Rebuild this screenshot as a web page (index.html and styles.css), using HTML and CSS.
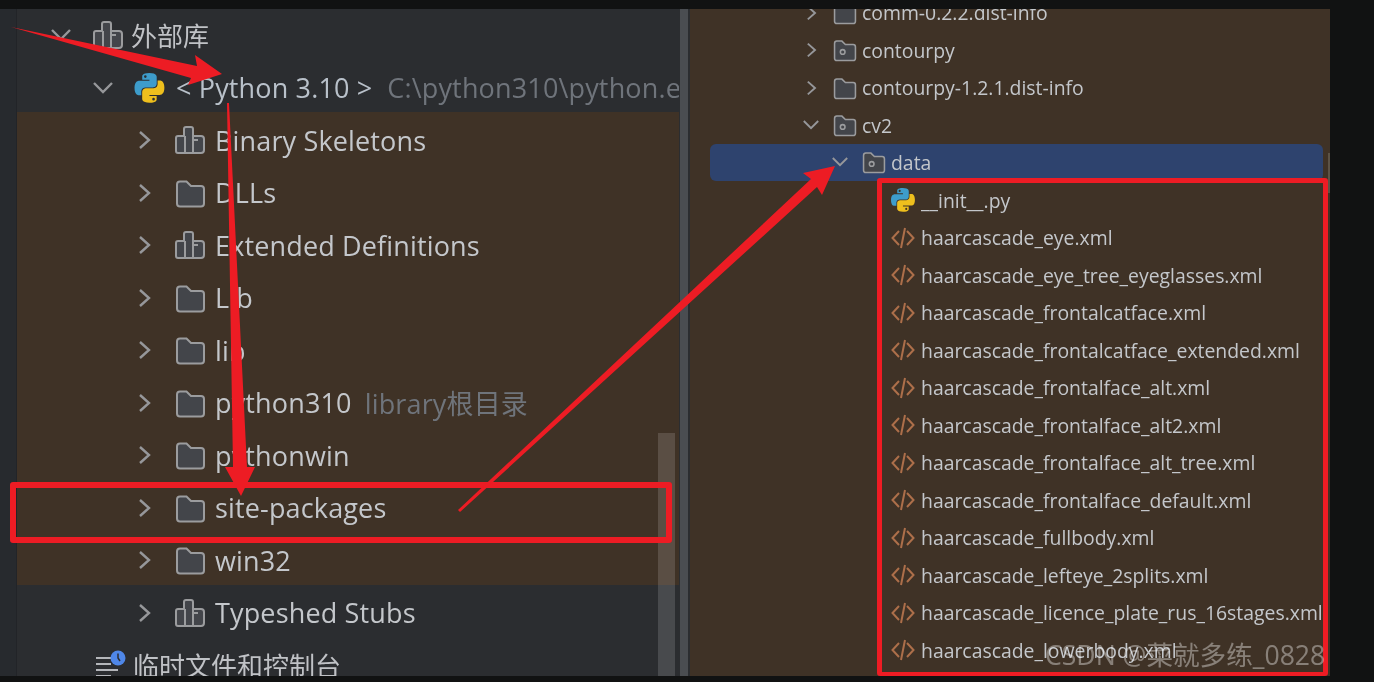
FILE: index.html
```html
<!DOCTYPE html>
<html lang="zh">
<head>
<meta charset="utf-8">
<title>Project tree</title>
<link rel="stylesheet" href="styles.css">
</head>
<body>
<svg class="defs" width="0" height="0" aria-hidden="true">
  <symbol id="right" viewBox="0 0 20 20"><path d="M6 2l9 8-9 8" fill="none" stroke-width="2.4"/></symbol>
  <symbol id="down" viewBox="0 0 20 20"><path d="M1 5l9 9 9-9" fill="none" stroke-width="2.4"/></symbol>
  <symbol id="folder" viewBox="0 0 31 30"><path class="fo" d="M2 6.500a3 3 0 0 1 3-3h6.500l4.500 4.500h10a3 3 0 0 1 3 3v14.500a3 3 0 0 1-3 3H5a3 3 0 0 1-3-3z"/></symbol>
  <symbol id="pack" viewBox="0 0 31 30"><path class="fo" d="M2 6.500a3 3 0 0 1 3-3h6.500l4.500 4.500h10a3 3 0 0 1 3 3v14.500a3 3 0 0 1-3 3H5a3 3 0 0 1-3-3z"/><circle class="fo" cx="12.500" cy="17.500" r="3"/></symbol>
  <symbol id="lib" viewBox="0 0 31 30"><path class="fo" d="M3 28a2 2 0 0 1-2-2V13a2 2 0 0 1 2-2h6V4a2 2 0 0 1 2-2h5a2 2 0 0 1 2 2v7h8a3 3 0 0 1 3 3v11a3 3 0 0 1-3 3z"/><path class="fo" d="M10 11v17M18 11v17M18 15h5"/></symbol>
  <symbol id="xml" viewBox="0 0 24 24"><path d="M8 5L1.500 12 8 19M16 5l6.500 7-6.500 7M14 2L10 22" fill="none" stroke="#ad6f4a" stroke-width="2"/></symbol>
  <symbol id="py" viewBox="0 0 111 111">
    <path fill="#3d9ccb" d="M54.900 0C26.900 0 28.600 12.200 28.600 12.200l0 12.600h26.700v3.800H18C18 28.600 0 26.500 0 55c0 28.500 15.700 27.500 15.700 27.500h9.400V69.300s-.5-15.700 15.500-15.700h26.600s15 .2 15-14.500V14.700S84 0 54.900 0zM40.100 8.500a4.800 4.800 0 1 1 0 9.600 4.800 4.800 0 0 1 0-9.600z"/>
    <path fill="#eebf1d" d="M55.700 110c28 0 26.300-12.200 26.300-12.200V85.200H55.300v-3.800h37.300S110.600 83.400 110.600 55s-15.700-27.400-15.700-27.400h-9.400v13.200s.5 15.700-15.500 15.700H43.400s-15-.2-15 14.500v24.300S26.600 110 55.700 110zm14.800-8.500a4.800 4.800 0 1 1 0-9.600 4.800 4.800 0 0 1 0 9.600z"/>
  </symbol>
  <symbol id="scratch" viewBox="0 0 31 30"><path d="M1 8h15M1 14h15M1 20h22M1 26h15" fill="none" stroke="#b4b6ba" stroke-width="2.200"/><circle cx="23" cy="8" r="7.500" fill="#4f87e8"/><path d="M23 3.500V8l2 3" fill="none" stroke="#2b2d30" stroke-width="1.500"/></symbol>
</svg>

<div class="frame">
  <section class="left">
    <div class="strip"></div>
    <div class="tree">
      <div class="row d0"><svg class="chev"><use href="#down"/></svg><svg class="ico"><use href="#lib"/></svg><span class="cjk">外部库</span></div>
      <div class="row d1"><svg class="chev"><use href="#down"/></svg><svg class="ico"><use href="#py"/></svg><span class="name blue">&lt; Python 3.10 &gt;</span><span class="hint path">C:\python310\python.exe</span></div>
      <div class="row d2 brown"><svg class="chev"><use href="#right"/></svg><svg class="ico"><use href="#lib"/></svg><span class="name">Binary Skeletons</span></div>
      <div class="row d2 brown"><svg class="chev"><use href="#right"/></svg><svg class="ico"><use href="#folder"/></svg><span class="name">DLLs</span></div>
      <div class="row d2 brown"><svg class="chev"><use href="#right"/></svg><svg class="ico"><use href="#lib"/></svg><span class="name">Extended Definitions</span></div>
      <div class="row d2 brown"><svg class="chev"><use href="#right"/></svg><svg class="ico"><use href="#folder"/></svg><span class="name">Lib</span></div>
      <div class="row d2 brown"><svg class="chev"><use href="#right"/></svg><svg class="ico"><use href="#folder"/></svg><span class="name">lib</span></div>
      <div class="row d2 brown"><svg class="chev"><use href="#right"/></svg><svg class="ico"><use href="#folder"/></svg><span class="name">python310</span><span class="hint">library根目录</span></div>
      <div class="row d2 brown"><svg class="chev"><use href="#right"/></svg><svg class="ico"><use href="#folder"/></svg><span class="name">pythonwin</span></div>
      <div class="row d2 brown"><svg class="chev"><use href="#right"/></svg><svg class="ico"><use href="#folder"/></svg><span class="name">site-packages</span></div>
      <div class="row d2 brown"><svg class="chev"><use href="#right"/></svg><svg class="ico"><use href="#folder"/></svg><span class="name">win32</span></div>
      <div class="row d2"><svg class="chev"><use href="#right"/></svg><svg class="ico"><use href="#lib"/></svg><span class="name">Typeshed Stubs</span></div>
      <div class="row d0 scratch"><svg class="ico"><use href="#scratch"/></svg><span class="cjk">临时文件和控制台</span></div>
    </div>
    <div class="thumb"></div>
  </section>
  <div class="divider"></div>
  <section class="right">
    <div class="list">
      <div class="item l1"><svg class="chev"><use href="#right"/></svg><svg class="ico"><use href="#folder"/></svg><span>comm-0.2.2.dist-info</span></div>
      <div class="item l1"><svg class="chev"><use href="#right"/></svg><svg class="ico"><use href="#pack"/></svg><span>contourpy</span></div>
      <div class="item l1"><svg class="chev"><use href="#right"/></svg><svg class="ico"><use href="#folder"/></svg><span>contourpy-1.2.1.dist-info</span></div>
      <div class="item l1"><svg class="chev"><use href="#down"/></svg><svg class="ico"><use href="#pack"/></svg><span>cv2</span></div>
      <div class="item l2 selected"><svg class="chev"><use href="#down"/></svg><svg class="ico"><use href="#pack"/></svg><span>data</span></div>
      <div class="item l3"><svg class="ico"><use href="#py"/></svg><span>__init__.py</span></div>
      <div class="item l3"><svg class="ico"><use href="#xml"/></svg><span>haarcascade_eye.xml</span></div>
      <div class="item l3"><svg class="ico"><use href="#xml"/></svg><span>haarcascade_eye_tree_eyeglasses.xml</span></div>
      <div class="item l3"><svg class="ico"><use href="#xml"/></svg><span>haarcascade_frontalcatface.xml</span></div>
      <div class="item l3"><svg class="ico"><use href="#xml"/></svg><span>haarcascade_frontalcatface_extended.xml</span></div>
      <div class="item l3"><svg class="ico"><use href="#xml"/></svg><span>haarcascade_frontalface_alt.xml</span></div>
      <div class="item l3"><svg class="ico"><use href="#xml"/></svg><span>haarcascade_frontalface_alt2.xml</span></div>
      <div class="item l3"><svg class="ico"><use href="#xml"/></svg><span>haarcascade_frontalface_alt_tree.xml</span></div>
      <div class="item l3"><svg class="ico"><use href="#xml"/></svg><span>haarcascade_frontalface_default.xml</span></div>
      <div class="item l3"><svg class="ico"><use href="#xml"/></svg><span>haarcascade_fullbody.xml</span></div>
      <div class="item l3"><svg class="ico"><use href="#xml"/></svg><span>haarcascade_lefteye_2splits.xml</span></div>
      <div class="item l3"><svg class="ico"><use href="#xml"/></svg><span>haarcascade_licence_plate_rus_16stages.xml</span></div>
      <div class="item l3"><svg class="ico"><use href="#xml"/></svg><span>haarcascade_lowerbody.xml</span></div>
    </div>
    <div class="mini-thumb"></div>
  </section>

  <div class="mark mark-left"></div>
  <div class="mark mark-right"></div>
  <div class="watermark">CSDN @菜就多练_0828</div>
  <svg class="arrows" viewBox="0 9 1330 667" width="1330" height="667" aria-hidden="true">
    <polygon points="11,27 197,66 195,55 222,74 188,85 191,78"/>
    <polygon points="227,103 229,103 247,467 255,467 241,496 225,467 233,467"/>
    <polygon points="458,510 811,179 803,173 835,166 822,195 817,187 460,512"/>
  </svg>
</div>
</body>
</html>
```

FILE: styles.css
```css
* { box-sizing: border-box; }

html, body {
  margin: 0;
  height: 682px;
  background: #111212;
  overflow: hidden;
}

.defs { position: absolute; }

.frame {
  position: relative;
  display: flex;
  width: 1330px;
  height: 667px;
  margin-top: 9px;
  overflow: hidden;
  filter: blur(0.45px);
  font-family: "Open Sans", "Noto Sans CJK SC", sans-serif;
}

.chev { stroke: #96979a; fill: none; flex: none; }
.ico { flex: none; }
.fo { fill: #43454a; stroke: #9b9c9e; stroke-width: 2; }

/* left pane */
.left {
  position: relative;
  display: flex;
  width: 679px;
  flex: none;
  background: #2b2d30;
  overflow: hidden;
}

.strip {
  width: 17px;
  flex: none;
  background: #272a2e;
  border-right: 1px solid #222428;
}

.tree {
  flex: 1;
  min-width: 0;
  margin-top: -2px;
}

.row {
  display: flex;
  align-items: center;
  height: 52.5px;
  padding-top: 4px;
  white-space: nowrap;
  overflow: hidden;
  font-size: 27px;
  letter-spacing: 0.15px;
  color: #c4c7cb;
}

.row.brown { background: #3f3226; }
.row .chev { width: 20px; height: 20px; margin-right: 21px; }
.row .ico { width: 31px; height: 30px; margin-right: 9px; }

.d0 { padding-left: 34px; }
.d0 .chev { margin-right: 22px; }
.d0 .ico { margin-right: 7px; }
.d1 { padding-left: 76px; }
.d1 .ico { margin-right: 11px; }
.d2 { padding-left: 117px; }
.scratch { padding-left: 78px; }

.cjk { color: #c0c2c6; font-size: 26px; letter-spacing: 0; }
.blue { color: #b9c1ca; }
.hint { margin-left: 13px; color: #6f747b; }
.path { margin-left: 15px; }

.thumb {
  position: absolute;
  left: 658px;
  top: 424px;
  bottom: 0;
  width: 17px;
  background: rgba(255, 255, 255, 0.14);
}

.divider {
  width: 11px;
  flex: none;
  background: #4a4d51;
  border-left: 1px solid #2b2d30;
  border-right: 2px solid #2b2d30;
}

/* right pane */
.right {
  position: relative;
  flex: 1;
  min-width: 0;
  background: #3f3226;
  overflow: hidden;
}

.list {
  margin: -15px 7px 0 20px;
}

.item {
  display: flex;
  align-items: center;
  height: 37.5px;
  white-space: nowrap;
  font-size: 19.4px;
  color: #c4c7cb;
}

.item .chev { width: 16px; height: 16px; margin-right: 14px; }
.item .ico { width: 24px; height: 24px; margin-right: 5px; }

.l1 { padding-left: 93px; }
.l2 { padding-left: 122px; }
.l3 { padding-left: 181px; }
.l3 .ico { margin-right: 6px; }

.selected {
  height: 36.500px;
  margin-bottom: 1px;
  border-radius: 6px;
  background: #2e436e;
}

.mini-thumb {
  position: absolute;
  right: 0;
  top: 144px;
  width: 2px;
  height: 40px;
  background: #5c5346;
}

/* annotations */
.mark {
  position: absolute;
  border-style: solid;
  border-color: #ed1c24;
  border-radius: 3px;
}

.mark-left {
  left: 10px;
  top: 473px;
  width: 662px;
  height: 61px;
  border-width: 6px;
}

.mark-right {
  left: 877px;
  top: 169px;
  width: 451px;
  height: 498px;
  border-width: 5px 5px 4px;
}

.watermark {
  position: absolute;
  left: 1045px;
  top: 625px;
  white-space: nowrap;
  font-size: 26.6px;
  color: rgba(255, 255, 255, 0.38);
}

.arrows {
  position: absolute;
  left: 0;
  top: 0;
  fill: #ed1c24;
}
```
